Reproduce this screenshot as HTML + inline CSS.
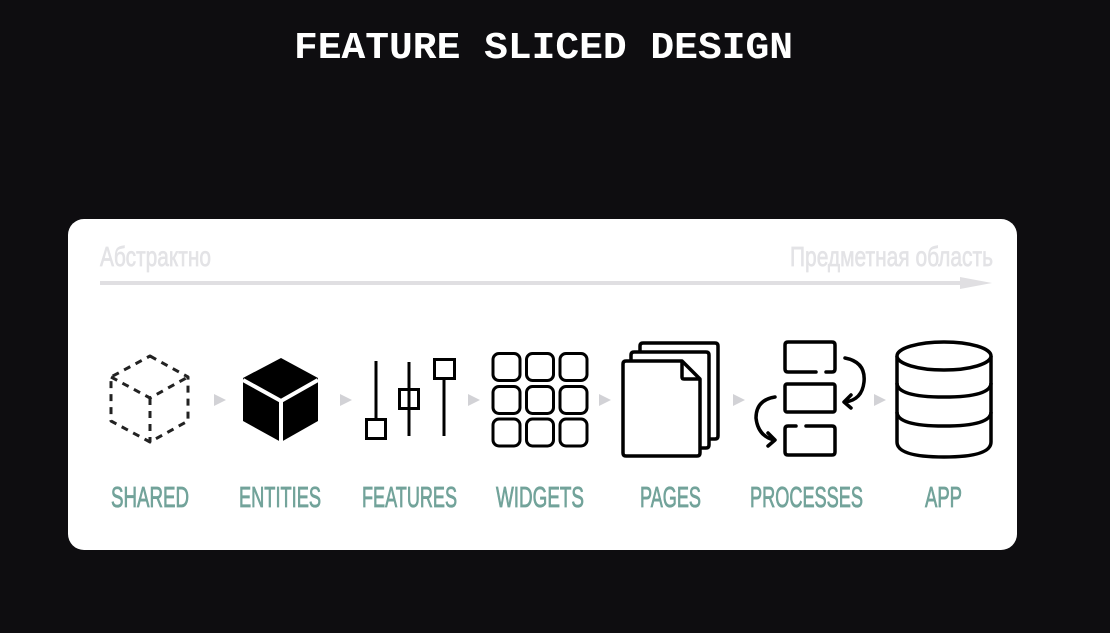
<!DOCTYPE html>
<html><head><meta charset="utf-8"><style>
html,body{margin:0;padding:0;background:#0e0d10;width:1110px;height:633px;overflow:hidden}
svg{display:block}
</style></head><body>
<svg width="1110" height="633" viewBox="0 0 1110 633" xmlns="http://www.w3.org/2000/svg">
<rect width="1110" height="633" fill="#0e0d10"/>
<text x="294" y="58" font-family="Liberation Mono, monospace" font-weight="bold" font-size="38" fill="#fff" textLength="499" lengthAdjust="spacingAndGlyphs">FEATURE SLICED DESIGN</text>
<rect x="68" y="219" width="949" height="331" rx="16" fill="#fff"/>
<g font-family="Liberation Sans, sans-serif" font-size="28" fill="#e3e3e6" stroke="#e3e3e6" stroke-width="0.7">
<text x="100" y="266" textLength="111" lengthAdjust="spacingAndGlyphs">Абстрактно</text>
<text x="790" y="266" textLength="203" lengthAdjust="spacingAndGlyphs">Предметная область</text>
</g>
<line x1="100" y1="283" x2="965" y2="283" stroke="#e0dfe2" stroke-width="4"/>
<polygon points="960,277 992,283 960,289" fill="#e0dfe2"/>
<g fill="#d2d2d6">
<polygon points="214,394 226,400 214,406"/>
<polygon points="340,394 352,400 340,406"/>
<polygon points="468,394 480,400 468,406"/>
<polygon points="599,394 611,400 599,406"/>
<polygon points="733,394 745,400 733,406"/>
<polygon points="874,394 886,400 874,406"/>
</g>
<g fill="none" stroke="#222" stroke-width="3" stroke-dasharray="7 6" stroke-linejoin="round">
<polygon points="150,356 188,377 188,421 150,442 111,421 111,377"/>
<polyline points="111,377 150,398 188,377"/>
<line x1="150" y1="398" x2="150" y2="442"/>
</g>
<polygon points="281,358 318,378 318,421 281,442 243,421 243,378" fill="#000"/>
<g stroke="#fff" stroke-width="4" fill="none">
<polyline points="243,380 281,401 318,380"/>
<line x1="281" y1="401" x2="281" y2="444"/>
</g>
<g fill="none" stroke="#000" stroke-width="3">
<line x1="376" y1="361" x2="376" y2="419"/><rect x="366.5" y="419.5" width="19" height="19"/>
<line x1="409" y1="362" x2="409" y2="436"/><rect x="399.5" y="389.5" width="19" height="19"/>
<line x1="444" y1="379" x2="444" y2="436"/><rect x="434.5" y="359.5" width="20" height="19"/>
</g>
<g fill="none" stroke="#000" stroke-width="3">
<rect x="493" y="353.5" width="27" height="27" rx="6"/><rect x="526.5" y="353.5" width="27" height="27" rx="6"/><rect x="560" y="353.5" width="27" height="27" rx="6"/>
<rect x="493" y="386.5" width="27" height="27" rx="6"/><rect x="526.5" y="386.5" width="27" height="27" rx="6"/><rect x="560" y="386.5" width="27" height="27" rx="6"/>
<rect x="493" y="419" width="27" height="27" rx="6"/><rect x="526.5" y="419" width="27" height="27" rx="6"/><rect x="560" y="419" width="27" height="27" rx="6"/>
</g>
<g fill="#fff" stroke="#000" stroke-width="3.5" stroke-linejoin="round">
<path d="M643,343 H715 Q718,343 718,346 V436 Q718,439 715,439 H643 Q640,439 640,436 V346 Q640,343 643,343 Z"/>
<path d="M634,352 H706 Q709,352 709,355 V445 Q709,448 706,448 H634 Q631,448 631,445 V355 Q631,352 634,352 Z"/>
<path d="M626,361 H682 L700,379 V453 Q700,456 697,456 H626 Q623,456 623,453 V364 Q623,361 626,361 Z"/>
<path d="M682,361 V377 Q682,379 684,379 H700" fill="none"/>
</g>
<g fill="none" stroke="#000" stroke-width="3.5" stroke-linecap="round" stroke-linejoin="round">
<path d="M816,372 H788 Q785,372 785,369 V345 Q785,342 788,342 H832 Q835,342 835,345 V369 Q835,372 832,372 H826"/>
<rect x="785" y="384" width="50" height="28" rx="2"/>
<path d="M806,426 H832 Q835,426 835,429 V452 Q835,455 832,455 H788 Q785,455 785,452 V429 Q785,426 788,426 H796"/>
<path d="M845,358 Q866,362 864,382 Q862,400 845,402"/>
<polyline points="851,395 844,402 851,408"/>
<path d="M775,397 Q756,400 756,418 Q758,436 774,440"/>
<polyline points="768,433 775,440 768,446"/>
</g>
<g fill="#fff" stroke="#000" stroke-width="3.5">
<path d="M897,356 V442 Q897,457 944,457 Q991,457 991,442 V356"/>
<ellipse cx="944" cy="356" rx="47" ry="14"/>
<path d="M897,383 Q897,397 944,397 Q991,397 991,383" fill="none"/>
<path d="M897,412 Q897,426 944,426 Q991,426 991,412" fill="none"/>
</g>
<g font-family="Liberation Sans, sans-serif" font-size="29" fill="#72a39a" stroke="#72a39a" stroke-width="0.8">
<text x="111" y="507" textLength="78" lengthAdjust="spacingAndGlyphs">SHARED</text>
<text x="239" y="507" textLength="82" lengthAdjust="spacingAndGlyphs">ENTITIES</text>
<text x="362" y="507" textLength="95" lengthAdjust="spacingAndGlyphs">FEATURES</text>
<text x="496" y="507" textLength="88" lengthAdjust="spacingAndGlyphs">WIDGETS</text>
<text x="640" y="507" textLength="61" lengthAdjust="spacingAndGlyphs">PAGES</text>
<text x="750" y="507" textLength="113" lengthAdjust="spacingAndGlyphs">PROCESSES</text>
<text x="925" y="507" textLength="37" lengthAdjust="spacingAndGlyphs">APP</text>
</g>
</svg>
</body></html>
